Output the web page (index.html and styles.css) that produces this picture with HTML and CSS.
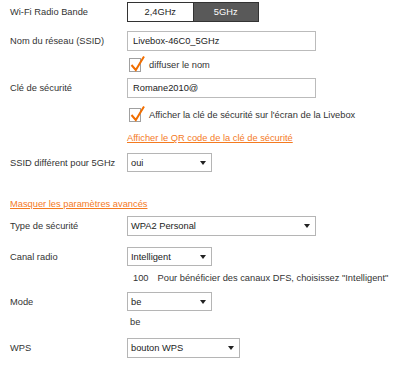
FILE: index.html
```html
<!DOCTYPE html>
<html lang="fr">
<head>
  <meta charset="UTF-8">
  <title>Wi-Fi</title>

  <link rel="stylesheet" href="styles.css">
</head>
<body>
  <div id="container-wifi">
    <div class="row row-band">
      <span class="label">Wi-Fi Radio Bande</span>
      <div class="toggle">
        <a class="toggle-btn">2,4GHz</a>
        <a class="toggle-btn active">5GHz</a>
      </div>
    </div>

    <div class="row row-ssid">
      <span class="label">Nom du réseau (SSID)</span>
      <div class="field field-wide">Livebox-46C0_5GHz</div>
    </div>

    <div class="row row-check row-broadcast">
      <svg class="check" width="16" height="17" viewBox="0 0 16 17">
        <rect x="0.5" y="3.5" width="11" height="13" fill="#fff" stroke="#a0a0a0"/>
        <path d="M2.5 10 L6.8 15 L15 1.5" fill="none" stroke="#f16e00" stroke-width="2"/>
      </svg>
      <span class="check-text">diffuser le nom</span>
    </div>

    <div class="row row-key">
      <span class="label">Clé de sécurité</span>
      <div class="field field-wide">Romane2010@</div>
    </div>

    <div class="row row-check row-display">
      <svg class="check" width="16" height="17" viewBox="0 0 16 17">
        <rect x="0.5" y="3.5" width="11" height="13" fill="#fff" stroke="#a0a0a0"/>
        <path d="M2.5 10 L6.8 15 L15 1.5" fill="none" stroke="#f16e00" stroke-width="2"/>
      </svg>
      <span class="check-text">Afficher la clé de sécurité sur l'écran de la Livebox</span>
    </div>

    <div class="row row-link row-qr">
      <a class="link">Afficher le QR code de la clé de sécurité</a>
    </div>

    <div class="row row-diff">
      <span class="label">SSID différent pour 5GHz</span>
      <div class="select select-small"><span>oui</span><span class="caret"></span></div>
    </div>

    <div class="row row-advanced">
      <a class="link">Masquer les paramètres avancés</a>
    </div>

    <div class="row row-type">
      <span class="label">Type de sécurité</span>
      <div class="select select-wide"><span>WPA2 Personal</span><span class="caret"></span></div>
    </div>

    <div class="row row-channel">
      <span class="label">Canal radio</span>
      <div class="select select-small"><span>Intelligent</span><span class="caret"></span></div>
    </div>

    <div class="row row-note">
      <span class="note-value">100</span>
      <span>Pour bénéficier des canaux DFS, choisissez "Intelligent"</span>
    </div>

    <div class="row row-mode">
      <span class="label">Mode</span>
      <div class="select select-small"><span>be</span><span class="caret"></span></div>
    </div>

    <div class="row row-mode-value">
      <span>be</span>
    </div>

    <div class="row row-wps">
      <span class="label">WPS</span>
      <div class="select select-medium"><span>bouton WPS</span><span class="caret"></span></div>
    </div>
  </div>
</body>
</html>
```

FILE: styles.css
```css
body {
  background-color: #fff;
  color: #333;
  font-family: "Liberation Sans", Arial, sans-serif;
  font-size: 9.3px;
  margin: 0;
}

a {
  cursor: pointer;
}

#container-wifi {
  padding: 0 10px;
}

.row {
  align-items: center;
  display: flex;
}

.label {
  flex-shrink: 0;
  width: 117px;
}

/* band toggle */
.row-band {
  height: 20px;
  margin-top: 2px;
}

.toggle {
  border: 1px solid #333;
  box-sizing: border-box;
  display: flex;
  height: 20px;
  width: 132px;
}

.toggle-btn {
  align-items: center;
  background-color: #fff;
  color: #222;
  display: flex;
  flex: 1;
  justify-content: center;
}

.toggle-btn.active {
  background-color: #595959;
  border-left: 1px solid #333;
  color: #fff;
}

/* text fields */
.field {
  align-items: center;
  border: 1px solid #bbb;
  box-sizing: border-box;
  color: #222;
  display: flex;
  height: 20px;
  padding-left: 5px;
}

.field-wide {
  width: 189px;
}

.row-ssid {
  margin-top: 9px;
}

.row-key {
  margin-top: 6px;
}

/* checkboxes */
.row-check {
  height: 17px;
  padding-left: 119px;
}

.row-broadcast {
  margin-top: 4px;
}

.row-display {
  margin-top: 7px;
}

.check {
  display: block;
  flex-shrink: 0;
  overflow: visible;
}

.check-text {
  margin-left: 4px;
  margin-top: 3px;
}

/* links */
.link {
  color: #f47a1f;
  text-decoration: underline;
}

.row-qr {
  height: 14px;
  margin-top: 9px;
  padding-left: 117px;
}

.row-advanced {
  height: 14px;
  margin-top: 25px;
}

/* selects */
.select {
  align-items: center;
  border: 1px solid #b5b5b5;
  box-sizing: border-box;
  color: #222;
  display: flex;
  height: 20px;
  justify-content: space-between;
  padding: 0 5px 0 3px;
}

.select-small {
  height: 19px;
  width: 85px;
}

.select-medium {
  width: 113px;
}

.select-wide {
  width: 189px;
}

.caret {
  border-left: 3.5px solid transparent;
  border-right: 3.5px solid transparent;
  border-top: 4px solid #222;
  height: 0;
  width: 0;
}

.row-diff {
  margin-top: 8px;
}

.row-type {
  margin-top: 5px;
}

.row-channel {
  margin-top: 11px;
}

.row-note {
  height: 12px;
  margin-top: 6px;
  padding-left: 123px;
}

.note-value {
  margin-right: 9px;
}

.row-mode {
  margin-top: 8px;
}

.row-mode-value {
  height: 12px;
  margin-top: 5px;
  padding-left: 120px;
}

.row-wps {
  margin-top: 10px;
}
```
